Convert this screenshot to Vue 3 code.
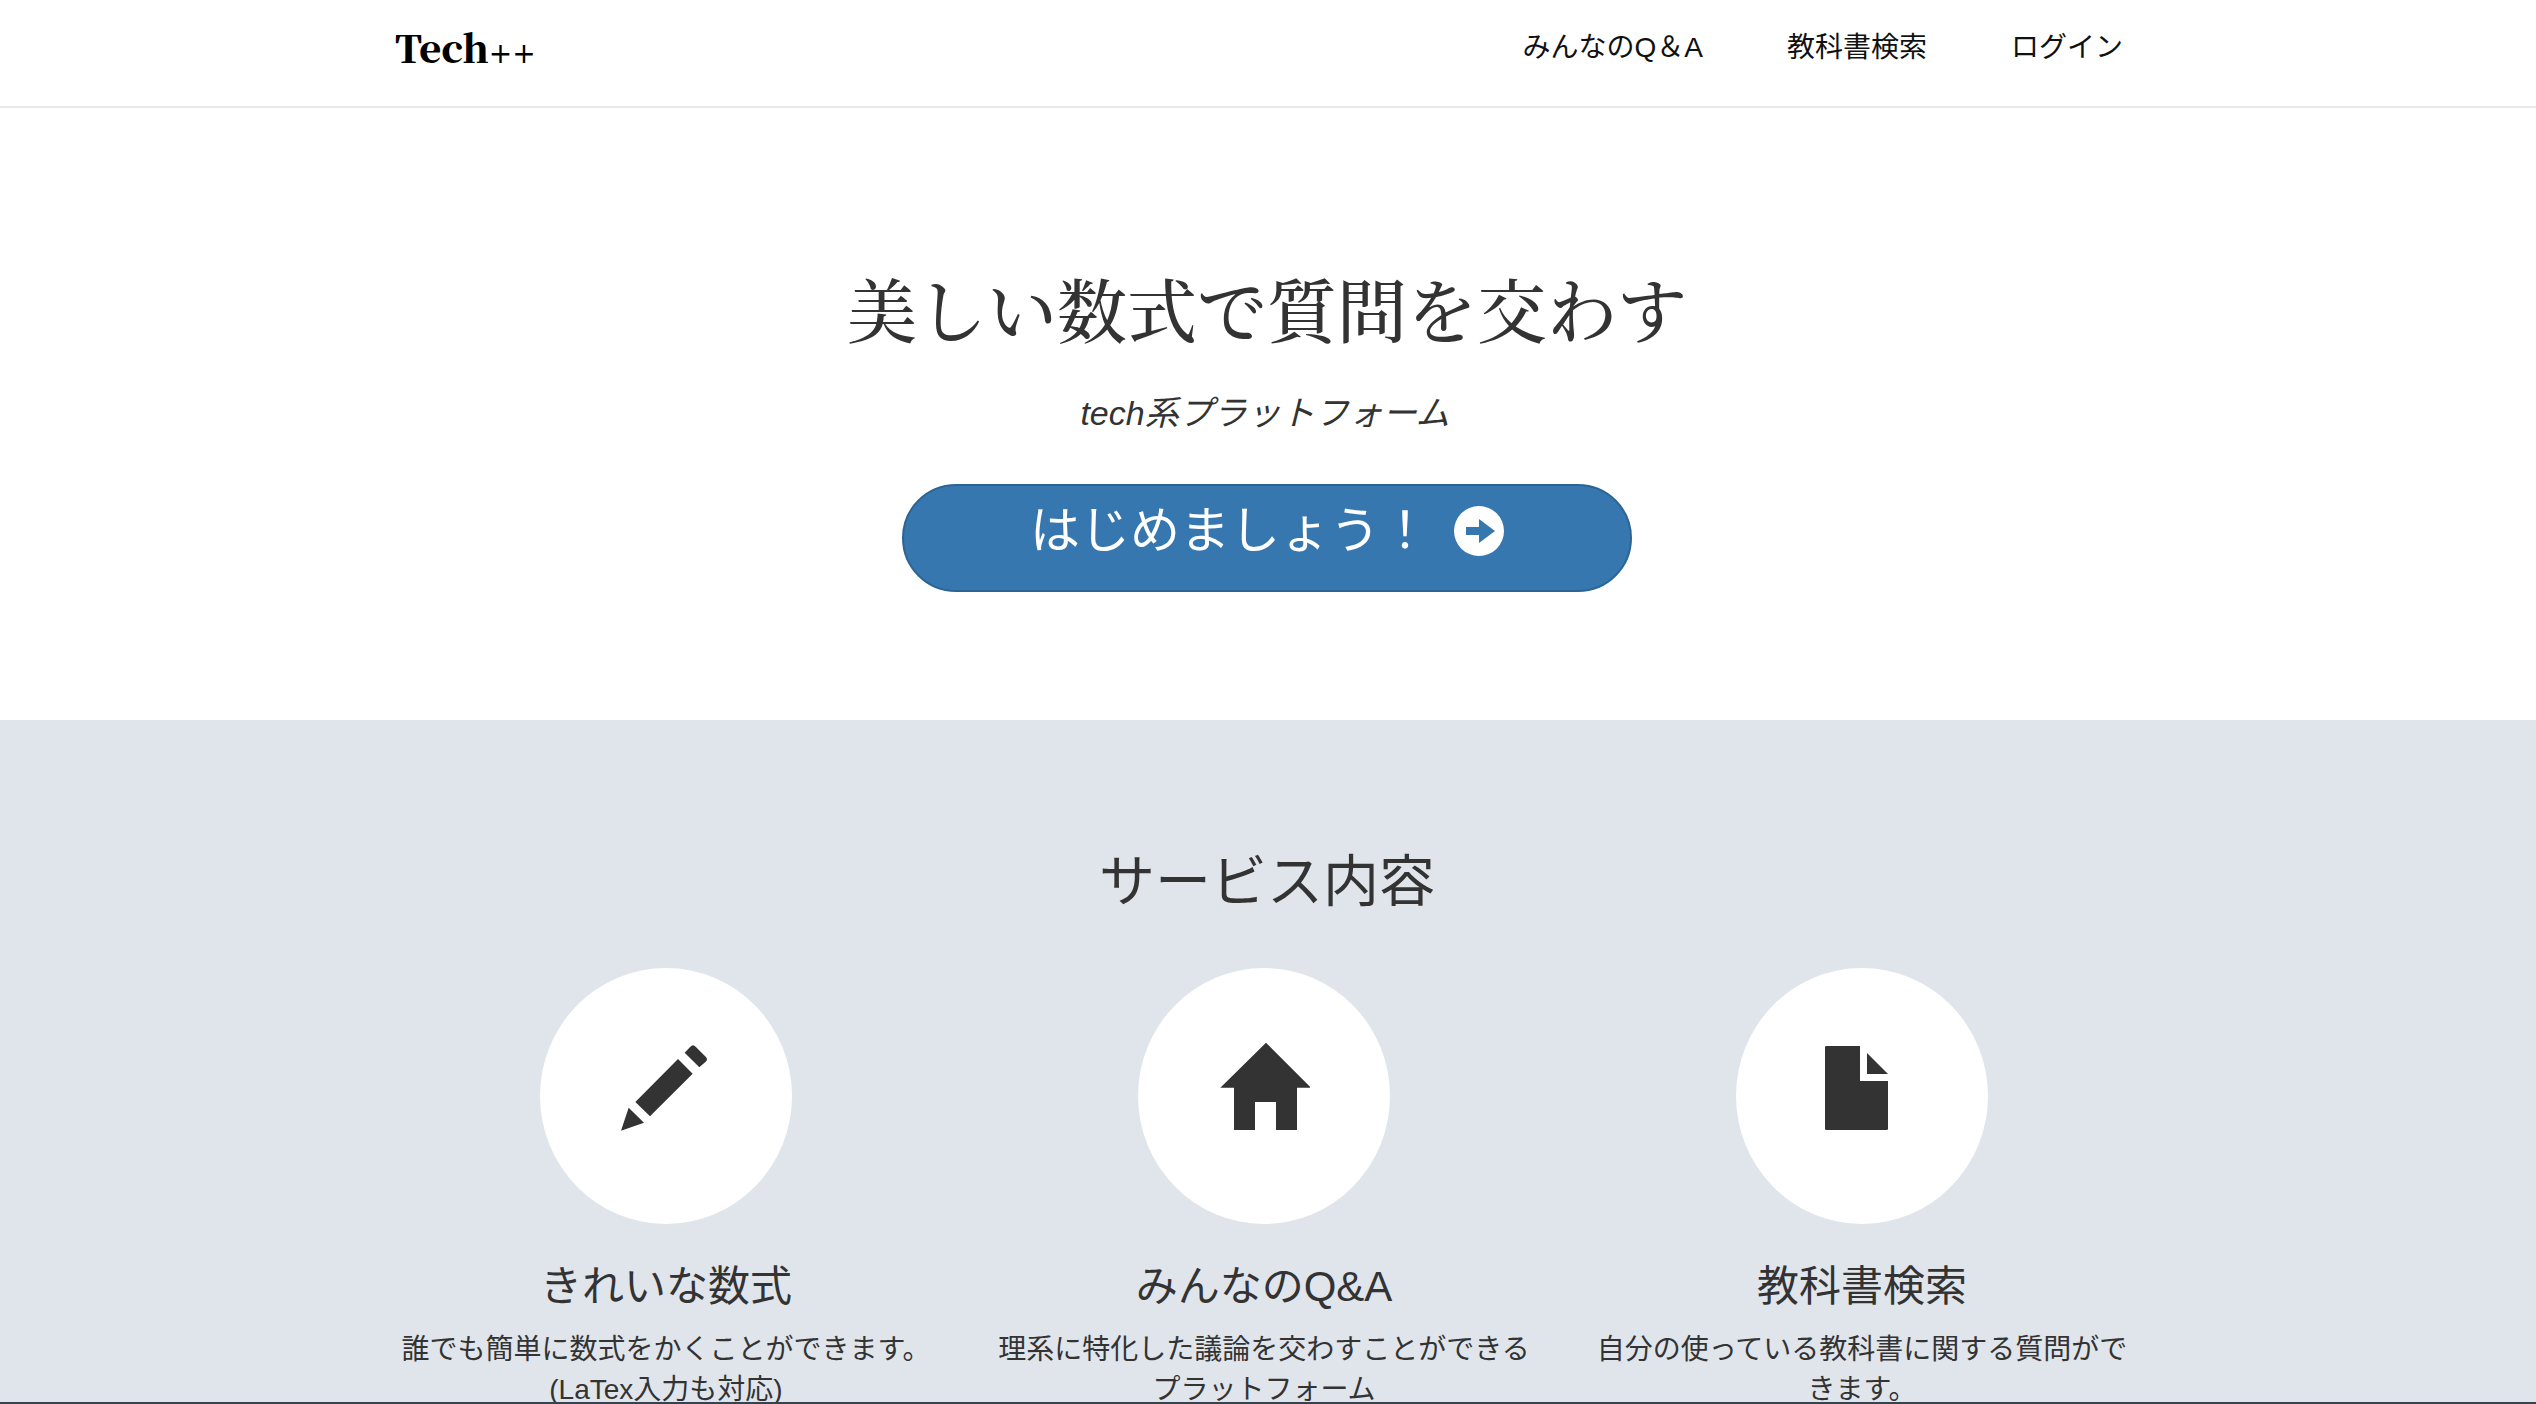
<script setup>
const links = ['みんなのQ＆A', '教科書検索', 'ログイン']

const services = [
  {
    title: 'きれいな数式',
    lines: ['誰でも簡単に数式をかくことができます。', '(LaTex入力も対応)'],
    viewBox: '300 276 276 276',
    path: 'M303 542L326 473L372 518ZM346 456L474 327L518 371L390 499ZM494 308L511 290Q519 281 527 290L557 320Q565 328 557 335L538 352Z'
  },
  {
    title: 'みんなのQ&A',
    lines: ['理系に特化した議論を交わすことができる', 'プラットフォーム'],
    viewBox: '294 276 276 276',
    path: 'M438 278L573 413H531V540H468V456H405V540H342V413H301Z'
  },
  {
    title: '教科書検索',
    lines: ['自分の使っている教科書に関する質問がで', 'きます。'],
    viewBox: '288 276 276 276',
    path: 'M319 288H420V393H504V536Q504 540 500 540H319Q315 540 315 536V292Q315 288 319 288ZM441 309L504 372H441Z'
  }
]
</script>

<template>
  <div class="page">
    <header class="topbar">
      <div class="container topbar-inner">
        <a class="brand" href="#">Tech<span class="plus">++</span></a>
        <nav class="nav">
          <a v-for="link in links" :key="link" class="nav-link" href="#">{{ link }}</a>
        </nav>
      </div>
    </header>

    <main>
      <section class="hero">
        <h1 class="hero-title">美しい数式で質問を交わす</h1>
        <p class="hero-sub">tech系プラットフォーム</p>
        <button class="start" type="button">
          <span>はじめましょう！</span>
          <svg class="start-icon" viewBox="0 0 50 50" aria-hidden="true">
            <path
              fill="#fff"
              fill-rule="evenodd"
              d="M25 0A25 25 0 1 1 25 50A25 25 0 1 1 25 0ZM12 21V29H25V37L41 25L25 13V21Z"
            />
          </svg>
        </button>
      </section>

      <section class="services">
        <h2 class="services-title">サービス内容</h2>
        <div class="container row">
          <article v-for="s in services" :key="s.title" class="service">
            <div class="circle">
              <svg class="service-icon" :viewBox="s.viewBox" aria-hidden="true">
                <path fill="#333" :d="s.path" />
              </svg>
            </div>
            <h3 class="service-title">{{ s.title }}</h3>
            <p class="service-text">
              <template v-for="(line, i) in s.lines" :key="line"><br v-if="i">{{ line }}</template>
            </p>
          </article>
        </div>
      </section>
    </main>
    <div class="edge"></div>
  </div>
</template>

<style>
body {
  margin: 0;
}
</style>

<style scoped>
.page {
  height: 100vh;
  overflow: hidden;
  background: #fff;
  color: #333;
  font-family: "Liberation Sans", "Noto Sans CJK JP", sans-serif;
  font-size: 28px;
  line-height: 40px;
}

.container {
  box-sizing: border-box;
  max-width: 1802px;
  margin: 0 auto;
}

.topbar {
  border-bottom: 2px solid #e7e7e7;
}

.topbar-inner {
  display: flex;
  justify-content: space-between;
  height: 106px;
  padding: 28px 46px 0 28px;
}

.brand {
  color: #000;
  font-family: "Noto Serif CJK JP", "Liberation Serif", serif;
  font-size: 38px;
  font-weight: 900;
  line-height: 38px;
  text-decoration: none;
}

.plus {
  font-family: "DejaVu Sans", sans-serif;
  font-size: 28px;
  font-weight: 400;
}

.nav {
  display: flex;
  gap: 84px;
}

.nav-link {
  color: #111;
  text-decoration: none;
}

.hero {
  display: flex;
  flex-direction: column;
  align-items: center;
  padding: 156px 2px 128px 0;
}

.hero-title {
  margin: 0;
  font-family: "Noto Serif CJK JP", "Liberation Serif", "Noto Sans CJK JP", serif;
  font-size: 70px;
  font-weight: 500;
  line-height: 88px;
}

.hero-sub {
  margin: 40px 0 50px;
  padding-right: 4px;
  font-size: 34px;
  font-style: italic;
  line-height: 42px;
}

.start {
  box-sizing: border-box;
  display: flex;
  justify-content: center;
  align-items: flex-start;
  gap: 24px;
  width: 730px;
  max-width: 100%;
  height: 108px;
  padding: 20px 0 0;
  border: 2px solid #2b6594;
  border-radius: 54px;
  background: #3777b0;
  color: #fff;
  font-family: inherit;
  font-size: 50px;
  line-height: 50px;
}

.start-icon {
  width: 50px;
  height: 50px;
}

.services {
  padding: 126px 0 60px;
  background: #e0e5ec;
}

.services-title {
  margin: 0;
  padding-right: 2px;
  font-size: 56px;
  font-weight: 400;
  line-height: 72px;
  text-align: center;
}

.row {
  display: grid;
  grid-template-columns: repeat(3, 1fr);
  margin-top: 50px;
  padding-right: 8px;
}

.service {
  display: flex;
  flex-direction: column;
  align-items: center;
  text-align: center;
}

.circle {
  box-sizing: border-box;
  display: flex;
  justify-content: center;
  width: 252px;
  height: 256px;
  padding-top: 74px;
  border-radius: 50%;
  background: #fff;
}

.service-icon {
  width: 92px;
  height: 92px;
}

.service-title {
  margin: 38px 0 18px;
  font-size: 42px;
  font-weight: 400;
  line-height: 50px;
}

.service-text {
  margin: 0;
}

.edge {
  position: fixed;
  right: 0;
  bottom: 0;
  left: 0;
  height: 2px;
  background: #36434f;
}
</style>
